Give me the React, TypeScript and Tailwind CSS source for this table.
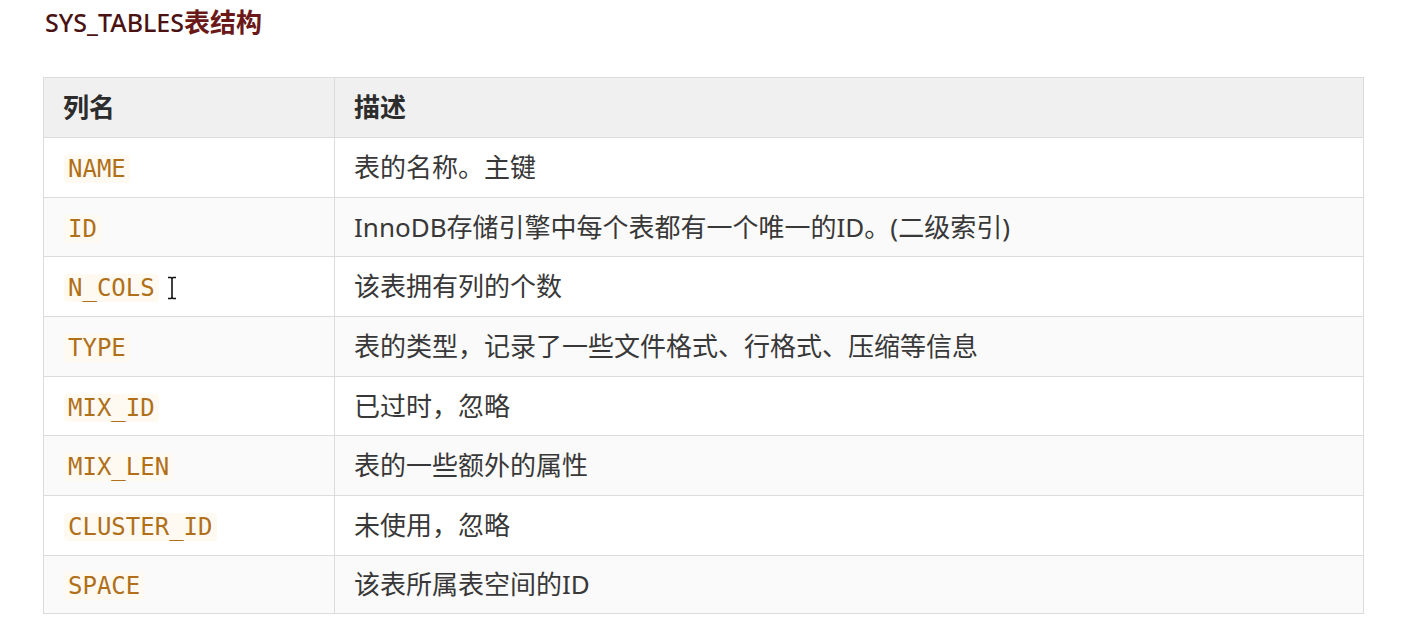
const rows: [string, string][] = [
  ["NAME", "表的名称。主键"],
  ["ID", "InnoDB存储引擎中每个表都有一个唯一的ID。(二级索引)"],
  ["N_COLS", "该表拥有列的个数"],
  ["TYPE", "表的类型，记录了一些文件格式、行格式、压缩等信息"],
  ["MIX_ID", "已过时，忽略"],
  ["MIX_LEN", "表的一些额外的属性"],
  ["CLUSTER_ID", "未使用，忽略"],
  ["SPACE", "该表所属表空间的ID"],
];

function IBeam() {
  return (
    <svg width="10" height="24" viewBox="0 0 10 24" className="inline-block align-middle ml-[8px] -mt-[2px]">
      <path d="M1 1.5h3l1 1 1-1h3M5 2.5v19M1 22.5h3l1-1 1 1h3" fill="none" stroke="#111" strokeWidth="1.6" />
    </svg>
  );
}

export default function App() {
  return (
    <main className="min-h-[636px] bg-white pl-[43px] pr-[44px] pt-[6px] font-['Noto_Sans','Noto_Sans_CJK_SC',sans-serif]">
      <h1 className="text-[25px] leading-[32px] text-[#4a1212] pl-[2px]">
        <span className="font-medium">SYS_TABLES</span>
        <span className="font-bold text-[#6a1818] text-[26px]">表结构</span>
      </h1>

      <table className="mt-[39px] w-[1321px] border-collapse text-[26px] text-[#383838]">
        <thead>
          <tr className="bg-[#f0f0f0]">
            <th className="h-[60px] w-[291px] border border-[#dcdcdc] pl-[19px] pr-5 text-left font-bold text-[#2c2c2c]">列名</th>
            <th className="h-[60px] border border-[#dcdcdc] pl-[19px] pr-5 text-left font-bold text-[#2c2c2c]">描述</th>
          </tr>
        </thead>
        <tbody>
          {rows.map(([name, desc], i) => (
            <tr key={name} className={i % 2 === 1 ? "bg-[#fafafa]" : "bg-white"}>
              <td className={`${i === rows.length - 1 ? "h-[58px]" : "h-[59.7px]"} border border-[#dcdcdc] pl-[20px] pr-5`}>
                <code className="rounded px-1 bg-[#fefaf2] text-[24px] text-[#b0701a] font-['DejaVu_Sans_Mono',monospace]">
                  {name}
                </code>
                {name === "N_COLS" && <IBeam />}
              </td>
              <td className="border border-[#dcdcdc] pl-[19px] pr-5">{desc}</td>
            </tr>
          ))}
        </tbody>
      </table>
    </main>
  );
}
